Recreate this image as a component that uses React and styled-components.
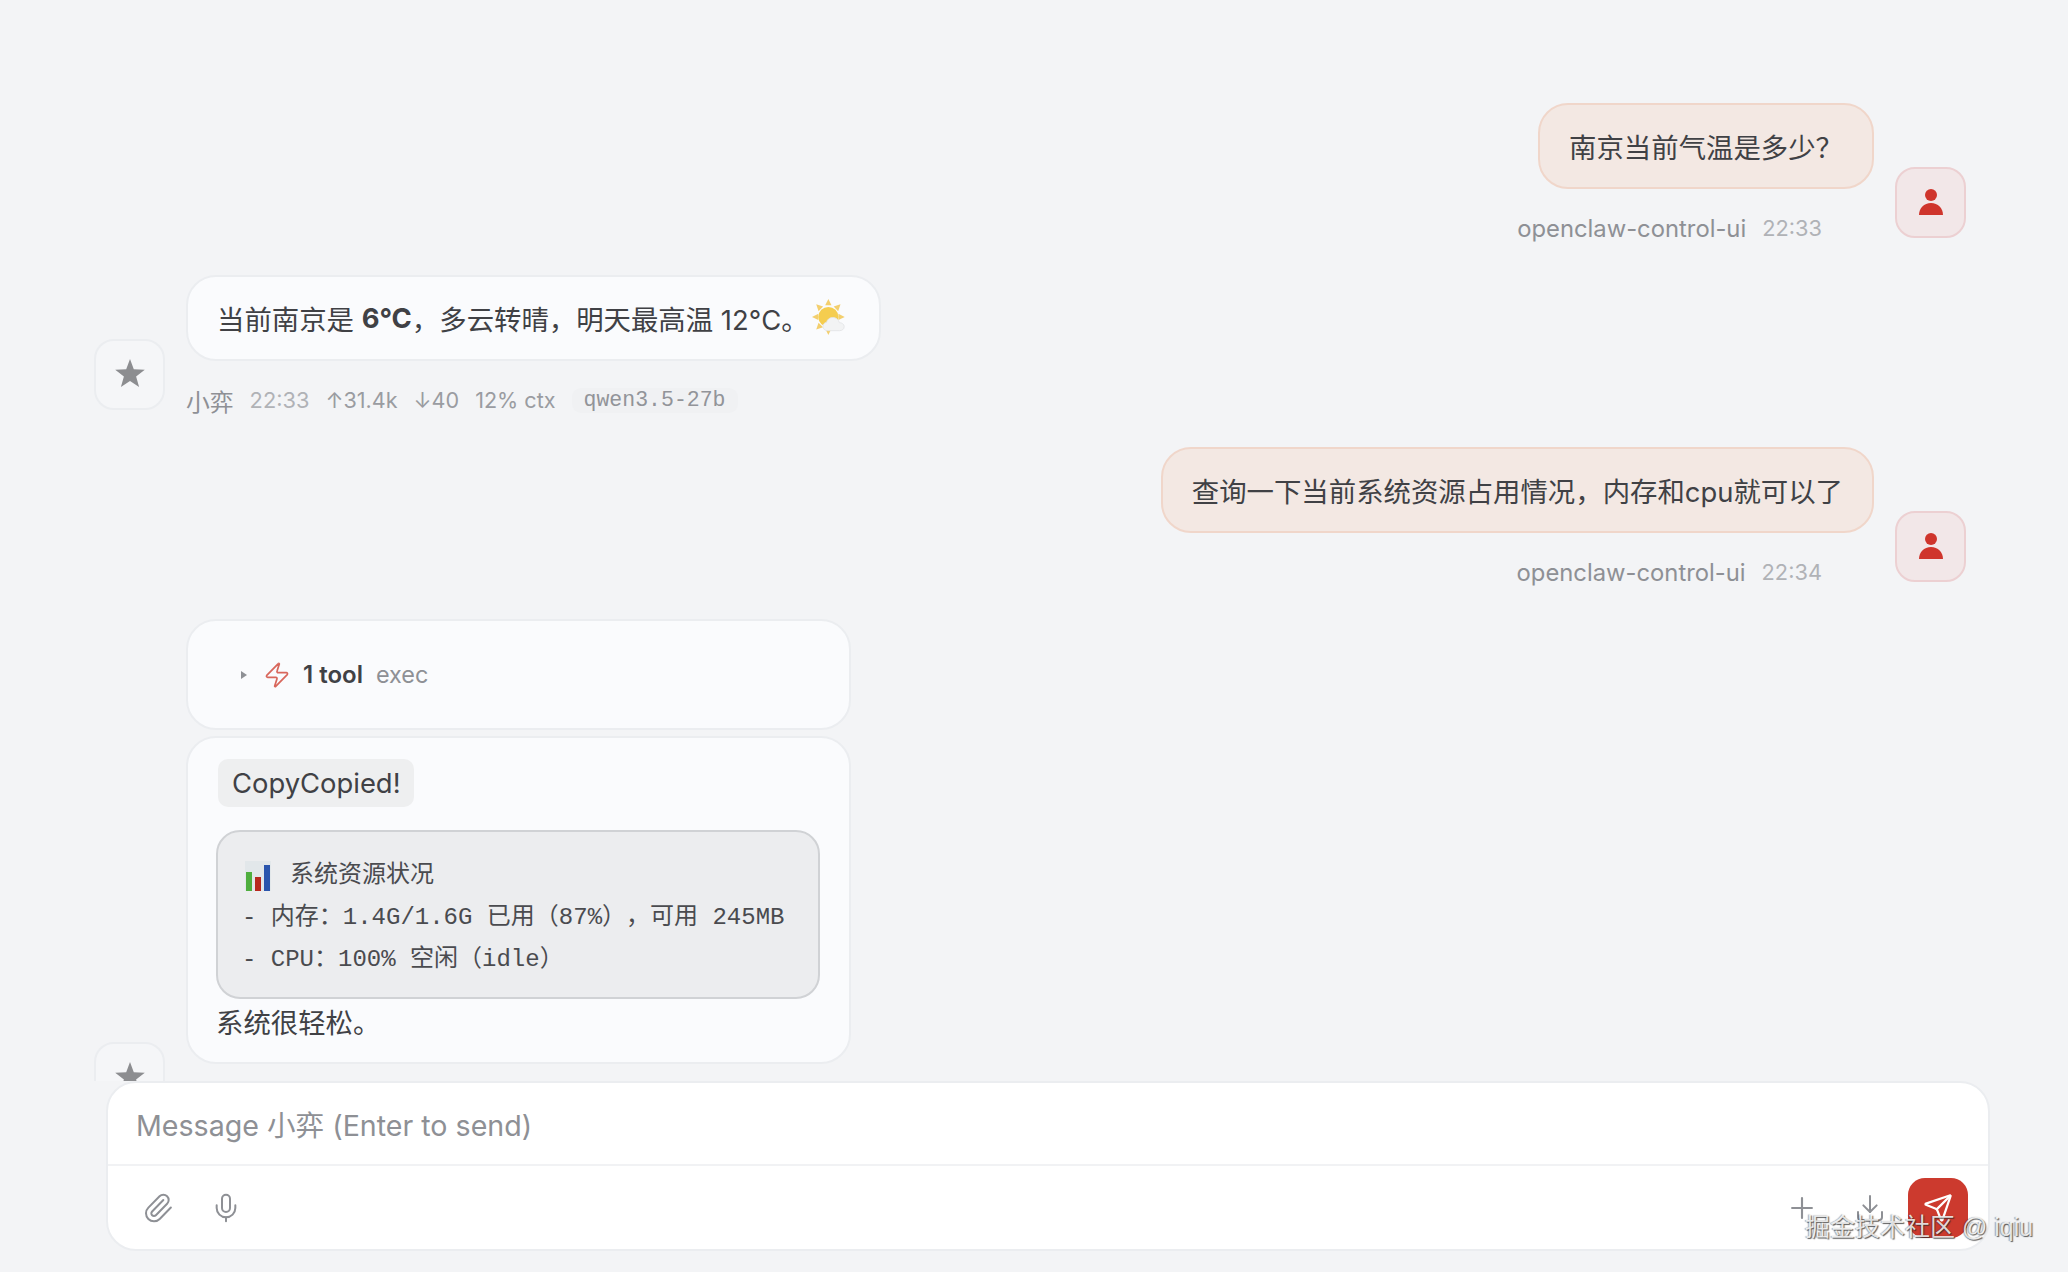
import React from "react";
import styled, { createGlobalStyle } from "styled-components";
import { Paperclip, Mic, Plus, Download, Send, Zap } from "lucide-react";

const GlobalStyle = createGlobalStyle`
  * { box-sizing: border-box; }
  html, body { margin: 0; padding: 0; height: 100%; background: #f3f4f6; }
  body { font-family: Inter, "Noto Sans CJK SC", sans-serif; color: #404145; }
`;

const Page = styled.div`
  position: relative;
  height: 100vh;
  display: flex;
  flex-direction: column;
  overflow: hidden;
  background: #f3f4f6;
`;

const Thread = styled.div`
  flex: 1;
  min-height: 0;
  overflow: hidden;
  display: flex;
  flex-direction: column;
  gap: 37px;
  padding: 103px 102px 0 94px;
`;

const Group = styled.div`
  flex-shrink: 0;
  display: flex;
  align-items: flex-end;
  gap: 21px;
  justify-content: ${(p) => (p.$user ? "flex-end" : "flex-start")};
`;

const Stack = styled.div`
  display: flex;
  flex-direction: column;
  gap: 29px;
  align-items: ${(p) => (p.$user ? "flex-end" : "flex-start")};
  padding-bottom: ${(p) => (p.$tail ? "49px" : "0")};
`;

const CardStack = styled.div`
  display: flex;
  flex-direction: column;
  gap: 6px;
  width: 665px;
`;

const Avatar = styled.div`
  flex-shrink: 0;
  width: 71px;
  height: 71px;
  border-radius: 20px;
  display: flex;
  align-items: center;
  justify-content: center;
  border: 2px solid ${(p) => (p.$user ? "#ecd0d2" : "#ebedf0")};
  background: ${(p) => (p.$user ? "#f2e7e8" : "#f5f6f8")};

  svg {
    margin-bottom: ${(p) => (p.$user ? "1px" : "3px")};
  }
`;

const Bubble = styled.div`
  height: 86px;
  display: flex;
  align-items: center;
  padding: 0 29px;
  font-size: 27.4px;
  white-space: nowrap;
  border-radius: 30px;
  border: 2px solid ${(p) => (p.$user ? "#f0d6ca" : "#ebedf0")};
  background: ${(p) => (p.$user ? "#f3e8e3" : "#fafbfd")};
  color: #404145;

  b {
    font-weight: 700;
  }
`;

const WeatherIcon = styled.svg`
  width: 38px;
  height: 38px;
  margin-left: 3px;
  flex-shrink: 0;
`;

const Meta = styled.div`
  height: 20px;
  display: flex;
  align-items: center;
  gap: 16px;
  font-size: 23.8px;
  white-space: nowrap;
  color: #8e9095;
  margin-right: ${(p) => (p.$user ? "52px" : "0")};
`;

const Time = styled.span`
  font-size: 21.8px;
  color: #b0b2b6;
`;

const Stat = styled.span`
  font-size: 21.6px;
  color: #9a9ca1;
`;

const ModelBadge = styled.span`
  font-family: "Liberation Mono", monospace;
  font-size: 21.5px;
  line-height: 25px;
  padding: 0 12px;
  border-radius: 9px;
  background: #f0f1f3;
  color: #929499;
`;

const Card = styled.div`
  border-radius: 30px;
  border: 2px solid #ebedf0;
  background: #fafbfd;
`;

const ToolCard = styled(Card)`
  height: 111px;
  display: flex;
  align-items: center;
  padding-left: 53px;
  font-size: 24px;
`;

const Caret = styled.span`
  width: 0;
  height: 0;
  border-left: 6px solid #8e9095;
  border-top: 4px solid transparent;
  border-bottom: 4px solid transparent;
  margin-right: 16px;
`;

const ToolName = styled.span`
  font-weight: 600;
  color: #404145;
  margin: 0 13px 0 12px;
`;

const ToolKind = styled.span`
  font-size: 23.4px;
  color: #8e9095;
`;

const ResultCard = styled(Card)`
  padding: 21px 29px 19px 28px;
`;

const CopyButton = styled.span`
  display: inline-flex;
  align-items: center;
  height: 48px;
  margin-left: 2px;
  padding: 0 13px 0 14px;
  border-radius: 10px;
  background: #eeeff0;
  font-size: 27.4px;
  color: #404145;
`;

const CodeBlock = styled.pre`
  margin: 23px 0 0;
  height: 169px;
  padding: 23px 24px 0;
  border-radius: 24px;
  border: 2px solid #d0d2d5;
  background: #ecedef;
  font-family: "Liberation Mono", "Noto Sans CJK SC", monospace;
  font-size: 24px;
  line-height: 42px;
  color: #4a4b4f;
  text-spacing-trim: space-all;
`;

const CodeTitle = styled.div`
  display: flex;
  align-items: center;
  height: 42px;
`;

const ChartIcon = styled.svg`
  width: 26px;
  height: 30px;
  margin-left: 3px;
  margin-right: 19px;
`;

const Paragraph = styled.div`
  margin-top: 4px;
  font-size: 27.4px;
  line-height: 40px;
  color: #404145;
`;

const ComposerWrap = styled.div`
  flex-shrink: 0;
  padding: 0 78px 21px 106px;
`;

const Composer = styled.div`
  height: 170px;
  border-radius: 30px;
  border: 2px solid #ebedf0;
  background: #fff;
  display: flex;
  flex-direction: column;
`;

const InputRow = styled.div`
  height: 83px;
  display: flex;
  align-items: center;
  padding-left: 28px;
  font-size: 28.6px;
  color: #8e9095;
  border-bottom: 2px solid #f1f2f4;
`;

const Toolbar = styled.div`
  flex: 1;
  display: flex;
  align-items: center;
  gap: 20px;
  padding: 0 20px 0 26px;
`;

const IconButton = styled.div`
  width: 48px;
  height: 48px;
  display: flex;
  align-items: center;
  justify-content: center;
  color: #8e9095;
`;

const Spacer = styled.div`
  flex: 1;
`;

const SendButton = styled.div`
  width: 60px;
  height: 60px;
  margin-left: -6px;
  border-radius: 17px;
  background: #cc3a2e;
  color: #fff;
  display: flex;
  align-items: center;
  justify-content: center;
`;

const Watermark = styled.div`
  position: absolute;
  left: 1805px;
  top: 1209px;
  font-family: "Liberation Sans", "Noto Sans CJK SC", sans-serif;
  font-size: 25px;
  line-height: 36px;
  white-space: nowrap;
  color: rgba(255, 255, 255, 0.82);
  text-shadow: 1px 1px 1px rgba(40, 40, 40, 0.75), -1px 0 1px rgba(40, 40, 40, 0.4);
`;

const PersonIcon = () => (
  <svg width="28" height="28" viewBox="0 0 28 28" fill="#cf352c">
    <circle cx="14" cy="7" r="6" />
    <path d="M2 27c0-7 5-12 12-12s12 5 12 12z" />
  </svg>
);

const StarIcon = () => (
  <svg width="30" height="30" viewBox="0 0 30 30" fill="#8c8d90">
    <path d="M15 1l3.8 10.3 11 .4-8.7 6.8 3 10.6L15 23l-9.1 6.1 3-10.6L.2 11.7l11-.4z" />
  </svg>
);

const Weather = () => (
  <WeatherIcon viewBox="0 0 36 36">
    <g fill="#f3cf6e">
      <path d="M15.5 0l3 6h-6z" />
      <path d="M15.5 34l-3-6h6z" />
      <path d="M0 17l6-3v6z" />
      <path d="M31 17l-6-3v6z" />
      <path d="M4 5l6.5 2.2-4.3 4.3z" />
      <path d="M27 5l-6.5 2.2 4.3 4.3z" />
      <path d="M4 29l2.2-6.5 4.3 4.3z" />
    </g>
    <circle cx="15.5" cy="17" r="9.5" fill="#f5cd4f" />
    <path
      d="M15 30c-3 0-4.6-1.8-4.6-4 0-2 1.4-3.6 3.4-3.9.7-2.8 3-4.6 5.9-4.6 3.2 0 5.6 2 6.2 4.9 2.6.1 4.6 1.6 4.6 3.8 0 2.2-1.8 3.8-4.4 3.8z"
      fill="#f2f3f4"
      stroke="#e3e4e6"
      strokeWidth="0.8"
    />
  </WeatherIcon>
);

const BarChart = () => (
  <ChartIcon viewBox="0 0 26 30">
    <rect width="26" height="30" fill="#e2e7ea" />
    <rect x="1" y="11" width="6" height="19" fill="#4fae3e" />
    <rect x="10" y="16" width="6" height="14" fill="#b8281e" />
    <rect x="19" y="4" width="6" height="26" fill="#2a55ad" />
  </ChartIcon>
);

const messageMeta = (name, time) => (
  <Meta $user>
    <span>{name}</span>
    <Time>{time}</Time>
  </Meta>
);

export default function App() {
  return (
    <Page>
      <GlobalStyle />
      <Thread>
        <Group $user>
          <Stack $user>
            <Bubble $user>南京当前气温是多少？</Bubble>
            {messageMeta("openclaw-control-ui", "22:33")}
          </Stack>
          <Avatar $user>
            <PersonIcon />
          </Avatar>
        </Group>

        <Group>
          <Avatar>
            <StarIcon />
          </Avatar>
          <Stack>
            <Bubble>
              当前南京是&nbsp;<b>6°C</b>，多云转晴，明天最高温 12°C。
              <Weather />
            </Bubble>
            <Meta>
              <span>小弈</span>
              <Time>22:33</Time>
              <Stat>↑31.4k</Stat>
              <Stat>↓40</Stat>
              <Stat>12% ctx</Stat>
              <ModelBadge>qwen3.5-27b</ModelBadge>
            </Meta>
          </Stack>
        </Group>

        <Group $user>
          <Stack $user>
            <Bubble $user>查询一下当前系统资源占用情况，内存和cpu就可以了</Bubble>
            {messageMeta("openclaw-control-ui", "22:34")}
          </Stack>
          <Avatar $user>
            <PersonIcon />
          </Avatar>
        </Group>

        <Group>
          <Avatar>
            <StarIcon />
          </Avatar>
          <Stack $tail>
            <CardStack>
              <ToolCard>
                <Caret />
                <Zap size={28} strokeWidth={1.5} color="#d8675c" />
                <ToolName>1 tool</ToolName>
                <ToolKind>exec</ToolKind>
              </ToolCard>
              <ResultCard>
                <CopyButton>CopyCopied!</CopyButton>
                <CodeBlock>
                  <CodeTitle>
                    <BarChart />
                    系统资源状况
                  </CodeTitle>
                  {"- 内存：1.4G/1.6G 已用（87%），可用 245MB\n- CPU：100% 空闲（idle）"}
                </CodeBlock>
                <Paragraph>系统很轻松。</Paragraph>
              </ResultCard>
            </CardStack>
          </Stack>
        </Group>
      </Thread>

      <ComposerWrap>
        <Composer>
          <InputRow>Message 小弈 (Enter to send)</InputRow>
          <Toolbar>
            <IconButton>
              <Paperclip size={32} strokeWidth={1.5} />
            </IconButton>
            <IconButton>
              <Mic size={32} strokeWidth={1.5} />
            </IconButton>
            <Spacer />
            <IconButton>
              <Plus size={34} strokeWidth={1.5} />
            </IconButton>
            <IconButton>
              <Download size={32} strokeWidth={1.5} />
            </IconButton>
            <SendButton>
              <Send size={30} strokeWidth={1.8} />
            </SendButton>
          </Toolbar>
        </Composer>
      </ComposerWrap>

      <Watermark>掘金技术社区 @ iqiu</Watermark>
    </Page>
  );
}
